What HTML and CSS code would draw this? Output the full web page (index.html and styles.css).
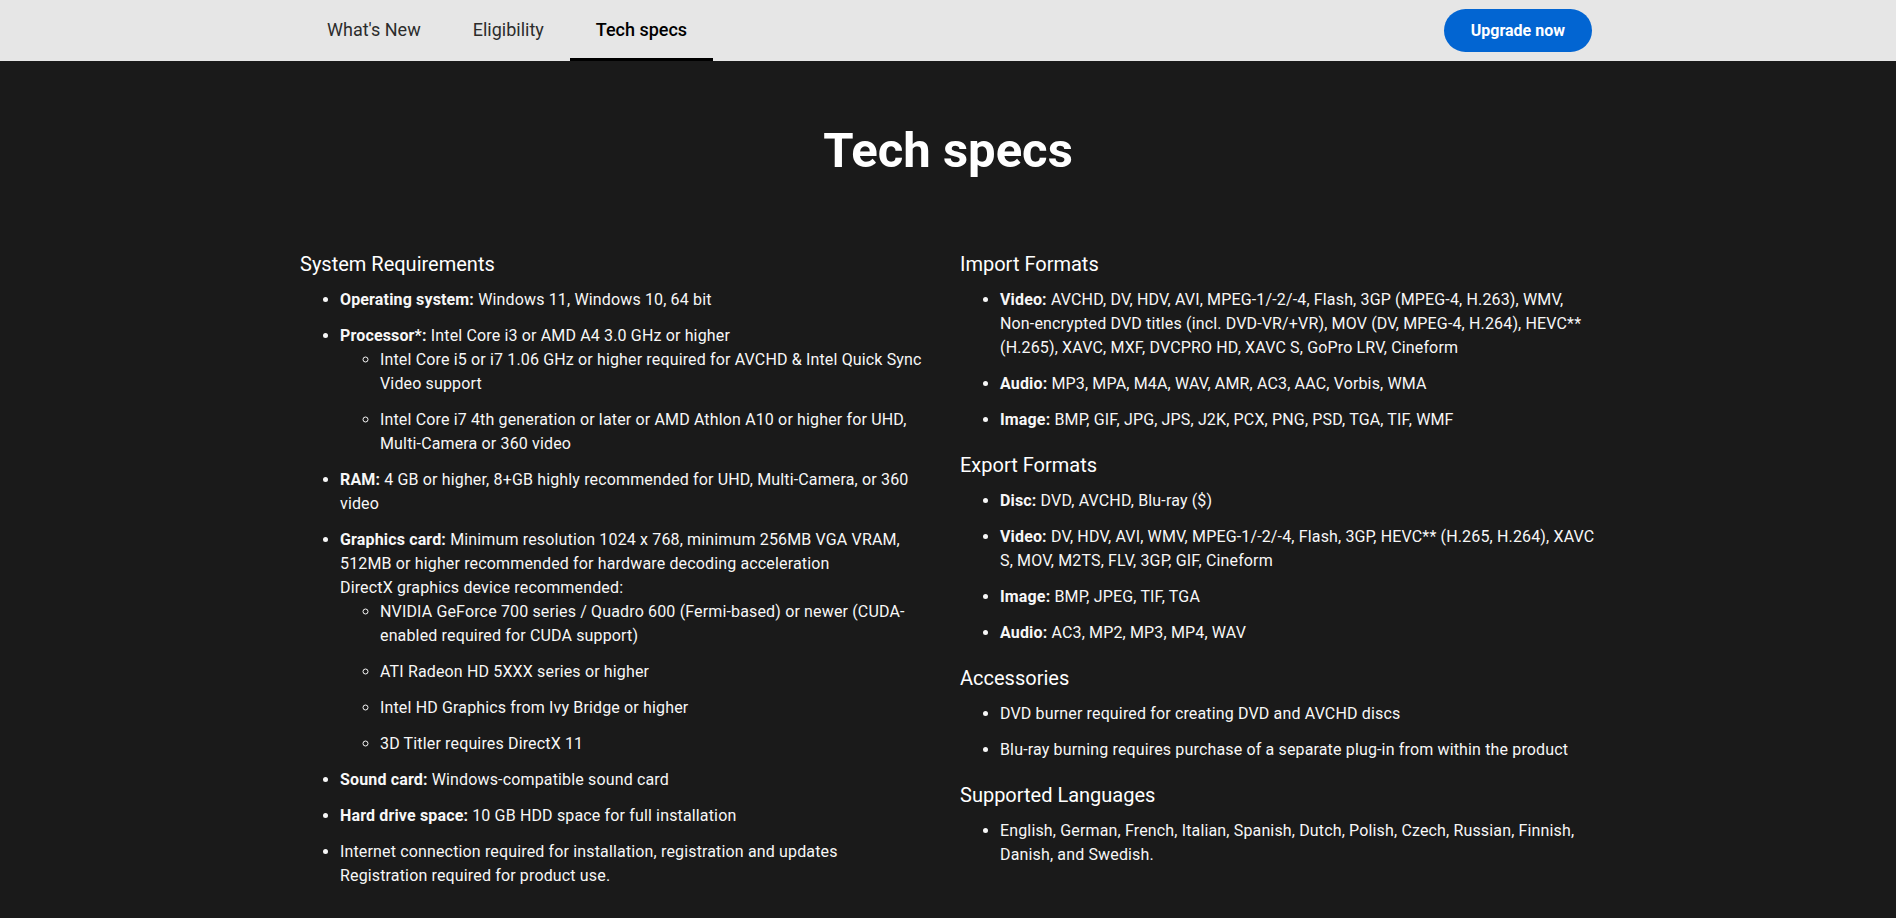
FILE: index.html
```html
<!DOCTYPE html>
<html lang="en">
<head>
<meta charset="utf-8">
<title>Tech specs</title>
<link rel="stylesheet" href="styles.css">
</head>
<body>
<nav class="subnav">
  <div class="subnav-inner">
    <div class="tabs">
      <a class="tab" href="#">What's New</a>
      <a class="tab" href="#">Eligibility</a>
      <a class="tab tab-active" href="#">Tech specs</a>
    </div>
    <a class="btn-upgrade" href="#">Upgrade now</a>
  </div>
</nav>
<main class="specs">
  <h1 class="specs-title">Tech specs</h1>
  <div class="cols">
    <section class="col">
      <h2 class="group-title">System Requirements</h2>
      <ul class="list">
        <li><b>Operating system:</b> Windows 11, Windows 10, 64 bit</li>
        <li><b>Processor*:</b> Intel Core i3 or AMD A4 3.0 GHz or higher
          <ul class="sublist">
            <li>Intel Core i5 or i7 1.06 GHz or higher required for AVCHD &amp; Intel Quick Sync Video support</li>
            <li>Intel Core i7 4th generation or later or AMD Athlon A10 or higher for UHD, Multi-Camera or 360 video</li>
          </ul>
        </li>
        <li><b>RAM:</b> 4 GB or higher, 8+GB highly recommended for UHD, Multi-Camera, or 360 video</li>
        <li><b>Graphics card:</b> Minimum resolution 1024 x 768, minimum 256MB VGA VRAM, 512MB or higher recommended for hardware decoding acceleration<br>DirectX graphics device recommended:
          <ul class="sublist">
            <li>NVIDIA GeForce 700 series / Quadro 600 (Fermi-based) or newer (CUDA-enabled required for CUDA support)</li>
            <li>ATI Radeon HD 5XXX series or higher</li>
            <li>Intel HD Graphics from Ivy Bridge or higher</li>
            <li>3D Titler requires DirectX 11</li>
          </ul>
        </li>
        <li><b>Sound card:</b> Windows-compatible sound card</li>
        <li><b>Hard drive space:</b> 10 GB HDD space for full installation</li>
        <li>Internet connection required for installation, registration and updates<br>Registration required for product use.</li>
      </ul>
    </section>
    <section class="col">
      <h2 class="group-title">Import Formats</h2>
      <ul class="list">
        <li><b>Video:</b> AVCHD, DV, HDV, AVI, MPEG-1/-2/-4, Flash, 3GP (MPEG-4, H.263), WMV, Non-encrypted DVD titles (incl. DVD-VR/+VR), MOV (DV, MPEG-4, H.264), HEVC** (H.265), XAVC, MXF, DVCPRO HD, XAVC S, GoPro LRV, Cineform</li>
        <li><b>Audio:</b> MP3, MPA, M4A, WAV, AMR, AC3, AAC, Vorbis, WMA</li>
        <li><b>Image:</b> BMP, GIF, JPG, JPS, J2K, PCX, PNG, PSD, TGA, TIF, WMF</li>
      </ul>
      <h2 class="group-title">Export Formats</h2>
      <ul class="list">
        <li><b>Disc:</b> DVD, AVCHD, Blu-ray ($)</li>
        <li><b>Video:</b> DV, HDV, AVI, WMV, MPEG-1/-2/-4, Flash, 3GP, HEVC** (H.265, H.264), XAVC S, MOV, M2TS, FLV, 3GP, GIF, Cineform</li>
        <li><b>Image:</b> BMP, JPEG, TIF, TGA</li>
        <li><b>Audio:</b> AC3, MP2, MP3, MP4, WAV</li>
      </ul>
      <h2 class="group-title">Accessories</h2>
      <ul class="list">
        <li>DVD burner required for creating DVD and AVCHD discs</li>
        <li>Blu-ray burning requires purchase of a separate plug-in from within the product</li>
      </ul>
      <h2 class="group-title">Supported Languages</h2>
      <ul class="list">
        <li>English, German, French, Italian, Spanish, Dutch, Polish, Czech, Russian, Finnish, Danish, and Swedish.</li>
      </ul>
    </section>
  </div>
</main>
</body>
</html>
```

FILE: styles.css
```css
* {
  box-sizing: border-box;
}

html, body {
  margin: 0;
  padding: 0;
  background: #1a1a1a;
}

body {
  font-family: Roboto, "Liberation Sans", Arial, sans-serif;
  color: #ffffff;
  min-height: 918px;
}

.subnav {
  background: #e6e6e6;
  height: 61px;
}

.subnav-inner {
  width: 1296px;
  margin: 0 auto;
  height: 100%;
  display: flex;
  align-items: center;
  justify-content: space-between;
  padding-left: 1px;
  padding-right: 4px;
}

.tabs {
  display: flex;
  height: 100%;
}

.tab {
  display: flex;
  align-items: center;
  padding: 0 26px;
  font-size: 18px;
  color: #2c2c2c;
  text-decoration: none;
  border-bottom: 3px solid transparent;
}

.tab-active {
  color: #000000;
  font-weight: 500;
  border-bottom-color: #000000;
}

.btn-upgrade {
  display: flex;
  align-items: center;
  height: 43px;
  padding: 0 27px;
  border-radius: 22px;
  background: #0265d2;
  color: #ffffff;
  font-size: 16px;
  font-weight: 700;
  text-decoration: none;
}

.specs {
  width: 1296px;
  margin: 0 auto;
  padding: 60px 0 40px;
}

.specs-title {
  margin: 0 0 68px;
  text-align: center;
  font-size: 49px;
  line-height: 60px;
  font-weight: 700;
  color: #ffffff;
}

.cols {
  display: grid;
  grid-template-columns: 1fr 1fr;
  column-gap: 24px;
}

.group-title {
  margin: 18px 0 9px;
  font-size: 20px;
  line-height: 30px;
  font-weight: 400;
  color: #ffffff;
}

.group-title:first-child {
  margin-top: 0;
}

.list {
  margin: 0;
  padding-left: 40px;
  font-size: 16px;
  line-height: 24px;
  letter-spacing: 0.15px;
  color: #f7f7f7;
}

.list li + li {
  margin-top: 12px;
}

.list b {
  font-weight: 700;
}

.sublist {
  margin: 0;
  padding-left: 40px;
  list-style: circle;
}
```
